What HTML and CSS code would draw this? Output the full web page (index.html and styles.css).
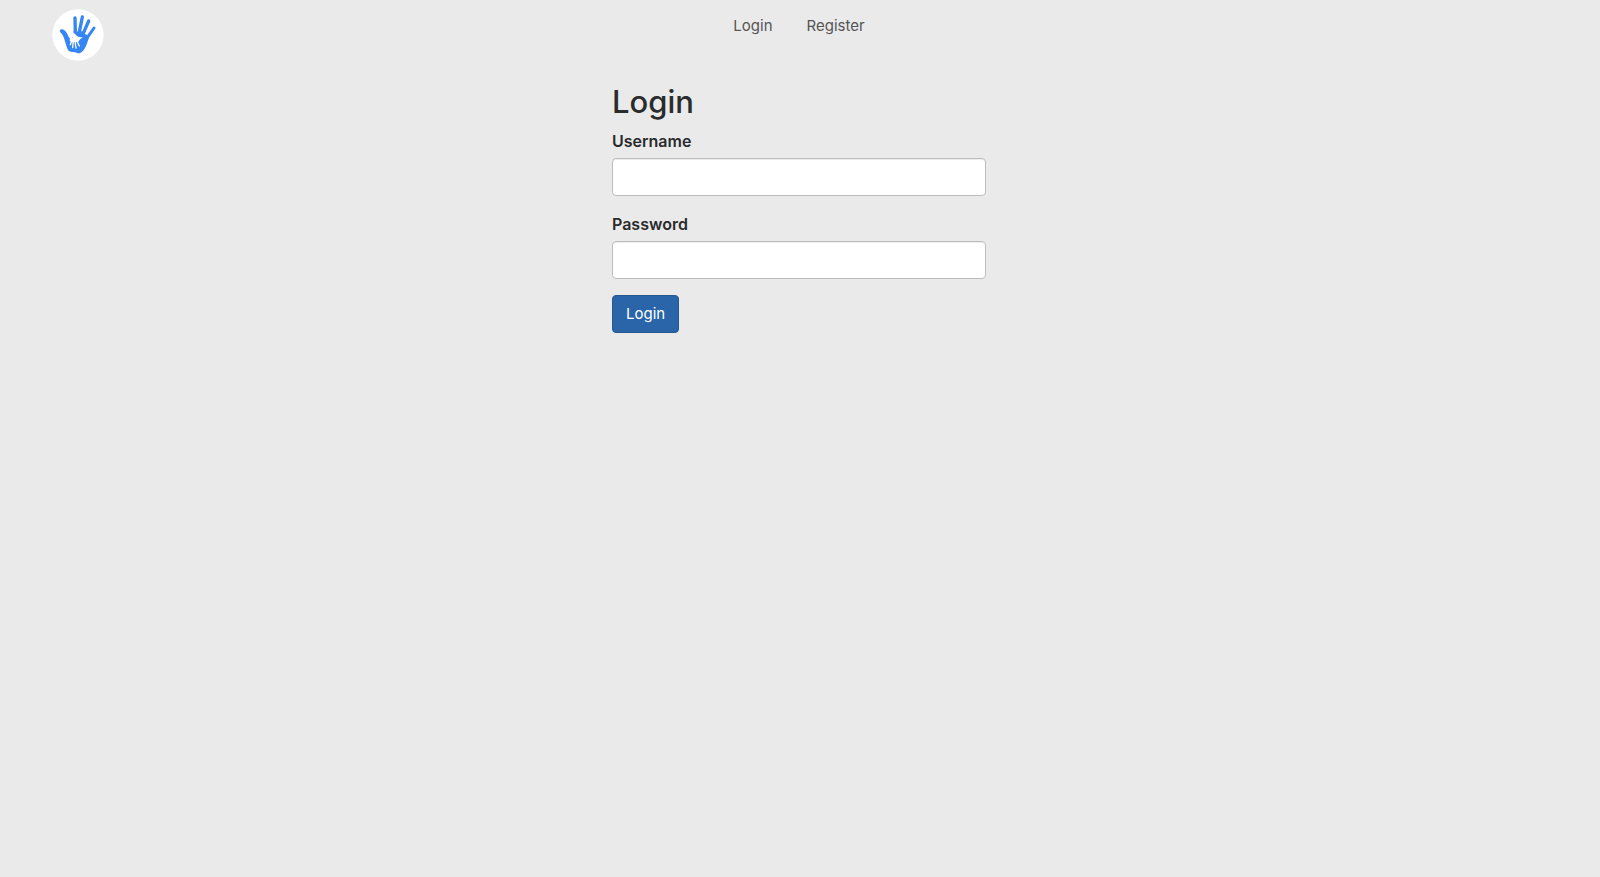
FILE: index.html
```html
<!DOCTYPE html>
<html lang="en">
<head>
  <meta charset="utf-8">
  <meta name="viewport" content="width=device-width, initial-scale=1">
  <title>Login</title>
  <link rel="stylesheet" href="styles.css">
</head>
<body>
  <header class="navbar">
    <a class="brand" href="#" aria-label="Home">
      <svg class="logo" viewBox="22 21 156 156" aria-hidden="true">
        <circle cx="100" cy="99" r="77" fill="#fff"/>
        <g fill="none" stroke="#3585f5" stroke-linecap="round">
          <path stroke-width="10" d="M91 48L92 92"/>
          <path stroke-width="10" d="M113 45L104 90"/>
          <path stroke-width="10" d="M132 57L114 98"/>
          <path stroke-width="9" d="M148 78L124 112"/>
        </g>
        <path fill="#3585f5" d="M87 86Q97 91 109 86L122 97L134 102C131 114 128 121 125 130C120 141 114 151 105 154C98 155 94 149 84 150C76 150 71 148 69 142C65 133 64 128 61 118C58 107 54 97 47 91C43 86 47 81 52 82C61 83 68 94 71 103C73 108 77 111 79 111L88 102Z"/>
        <path fill="#fff" d="M76 108C82 109 86 105 86 101C86 97 86 95 88 93C92 96 95 102 101 104C105 106 110 104 114 107C109 109 106 111 104 115C103 119 99 121 95 120L80 121L75 116Z"/>
        <g fill="none" stroke="#fff" stroke-width="4" stroke-linecap="round">
          <path d="M83 112L77 128"/>
          <path d="M86 115L84 137"/>
          <path d="M91 117L94 138"/>
          <path d="M96 116L104 132"/>
        </g>
      </svg>
    </a>
    <nav class="links">
      <a class="link" href="#">Login</a>
      <a class="link" href="#">Register</a>
    </nav>
  </header>
  <main class="content">
    <h2 class="title">Login</h2>
    <form>
      <div class="group">
        <label class="label" for="username">Username</label>
        <input class="field" id="username" type="text">
      </div>
      <div class="group">
        <label class="label" for="password">Password</label>
        <input class="field" id="password" type="password">
      </div>
      <button class="submit" type="submit">Login</button>
    </form>
  </main>
</body>
</html>
```
FILE: styles.css
```css
* {
  box-sizing: border-box;
}

body {
  margin: 0;
  padding-right: 2px;
  background: #eaeaea;
  color: #292b2c;
  font: 15px/24px Inter, sans-serif;
}

.navbar {
  display: grid;
  grid-template-columns: 1fr auto 1fr;
  align-items: start;
  padding: 9px 52px 8px;
}

.brand,
.logo {
  display: block;
  width: 52px;
  height: 52px;
}

.links {
  display: flex;
  gap: 2px;
}

.link {
  padding: 5px 16px;
  color: #555;
  text-decoration: none;
}

.content {
  width: 374px;
  max-width: 100%;
  margin: 15px auto 0;
}

.title {
  margin: 0 0 9px;
  font-size: 31px;
  font-weight: 500;
  line-height: 36px;
}

.group {
  margin-bottom: 16px;
}

.label {
  display: block;
  margin-bottom: 5px;
  font-size: 16px;
  font-weight: 600;
}

.field {
  display: block;
  width: 100%;
  height: 38px;
  padding: 6px 12px;
  border: 1px solid #bdbdbd;
  border-radius: 4px;
  background: #fff;
  box-shadow: inset 0 1px 1px #00000013;
  font: inherit;
}

.submit {
  height: 38px;
  padding: 6px 13px;
  border: 1px solid #24598f;
  border-radius: 4px;
  background: #2a65a9;
  color: #fff;
  font: inherit;
}
```
